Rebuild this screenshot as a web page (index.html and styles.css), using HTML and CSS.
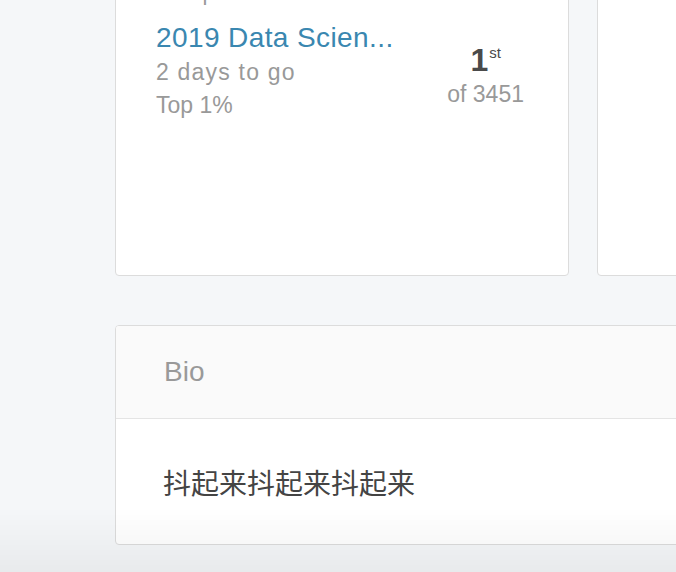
FILE: index.html
```html
<!DOCTYPE html>
<html lang="en">
<head>
<meta charset="utf-8">
<title>Profile</title>
<link rel="stylesheet" href="styles.css">
</head>
<body>
<main class="page">
  <section class="cards">
    <article class="card">
      <div class="card-label">Competitions</div>
      <div class="comp">
        <div class="comp-info">
          <a class="comp-title" href="#">2019 Data Scien...</a>
          <div class="comp-meta comp-meta-wide">2 days to go</div>
          <div class="comp-meta">Top 1%</div>
        </div>
        <div class="comp-rank">
          <div class="rank-num">1<sup>st</sup></div>
          <div class="rank-of">of 3451</div>
        </div>
      </div>
    </article>
    <article class="card"></article>
  </section>
  <section class="bio">
    <header class="bio-head">Bio</header>
    <div class="bio-body">抖起来抖起来抖起来</div>
  </section>
</main>
<div class="fade"></div>
</body>
</html>
```
FILE: styles.css
```css
* { box-sizing: border-box; }
html, body {
  margin: 0;
  padding: 0;
  height: 100%;
  overflow: hidden;
  background: #f5f7f9;
  font-family: "Liberation Sans", "Noto Sans CJK SC", Arial, sans-serif;
}
.page {
  width: 936px;
  margin: -47px 0 0 115px;
}
.cards {
  display: flex;
  gap: 28px;
}
.card {
  flex: 0 0 454px;
  height: 323px;
  background: #fff;
  border: 1px solid #dcdcdc;
  border-radius: 4px;
  padding: 24px 44px 0 40px;
}
.card-label {
  font-size: 22px;
  line-height: 30px;
  color: #9a9a9a;
  margin-bottom: 12px;
}
.comp {
  display: flex;
  justify-content: space-between;
  align-items: flex-start;
}
.comp-info {
  display: flex;
  flex-direction: column;
  width: 250px;
}
.comp-title {
  display: block;
  font-size: 28px;
  line-height: 36px;
  letter-spacing: 0.4px;
  color: #3a87b0;
  text-decoration: none;
  white-space: nowrap;
}
.comp-meta {
  font-size: 23px;
  line-height: 33px;
  color: #999;
}
.comp-meta-wide {
  letter-spacing: 1.2px;
}
.comp-rank {
  margin-top: 22px;
  text-align: center;
}
.rank-num {
  font-size: 32px;
  line-height: 36px;
  font-weight: bold;
  color: #4a4a4a;
}
.rank-num sup {
  font-size: 15px;
  font-weight: normal;
  vertical-align: 0;
  position: relative;
  top: -13px;
  margin-left: 1px;
}
.rank-of {
  font-size: 23px;
  line-height: 20px;
  color: #999;
}
.bio {
  margin-top: 49px;
  background: #fff;
  border: 1px solid #dcdcdc;
  border-radius: 4px;
  overflow: hidden;
}
.bio-head {
  background: #fafafa;
  border-bottom: 1px solid #e4e4e4;
  padding: 29px 48px;
  font-size: 28px;
  line-height: 34px;
  color: #999;
}
.bio-body {
  padding: 43px 48px 42px 47px;
  font-family: "Noto Sans CJK SC", "Liberation Sans", sans-serif;
  font-size: 28px;
  line-height: 40px;
  color: #444;
}
.fade {
  position: fixed;
  left: 0;
  right: 0;
  bottom: 0;
  height: 64px;
  background: linear-gradient(rgba(0,0,0,0), rgba(0,0,0,0.05));
  pointer-events: none;
}
```
